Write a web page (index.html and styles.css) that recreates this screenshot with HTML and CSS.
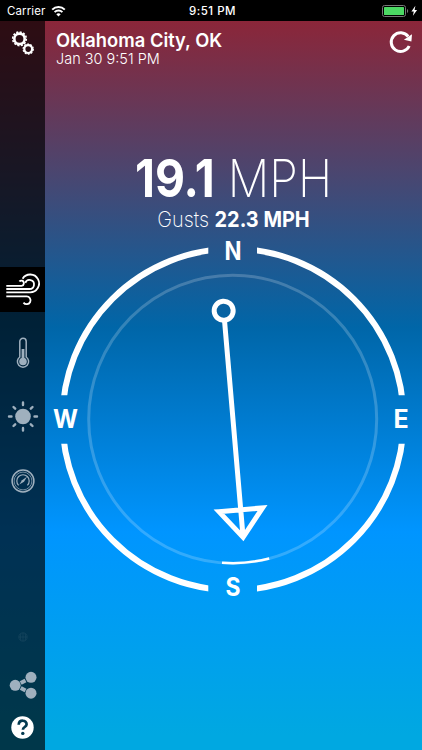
FILE: index.html
```html
<!DOCTYPE html>
<html lang="en">
  <head>
    <meta charset="utf-8">
    <meta name="viewport" content="width=device-width, initial-scale=1">
    <title>Wind</title>
    <link rel="stylesheet" href="styles.css">
  </head>

  <body>
    <header class="status">
      <div class="carrier">
        <span>Carrier</span>
        <svg width="15" height="12" viewBox="0 0 15 12" fill="none" stroke="#fff" stroke-width="2">
          <path d="M1.2 4.6a9 9 0 0 1 12.6 0M3.6 7.1a5.6 5.6 0 0 1 7.8 0"/>
          <path d="M7.5 11.5L5.3 9.3a3.2 3.2 0 0 1 4.4 0z" fill="#fff" stroke="none"/>
        </svg>
      </div>
      <div class="clock">9:51 PM</div>
      <div class="power">
        <svg width="36" height="12" viewBox="0 0 36 12">
          <rect x=".5" y=".5" width="23" height="11" rx="2" fill="none" stroke="#777"/>
          <rect x="2" y="2" width="20" height="8" rx=".6" fill="#4cd964"/>
          <path d="M25 4v4c1.6-.6 1.6-3.4 0-4z" fill="#777"/>
          <path d="M33.4.8l-4 5.8h2.4l-.9 4.2 4.2-5.8h-2.5z" fill="#fff"/>
        </svg>
      </div>
    </header>

    <div class="app">
      <nav class="sidebar">
        <a class="item settings">
          <svg width="24" height="26" viewBox="0 0 24 26" fill="none" stroke="#fff">
            <circle cx="8.5" cy="8.8" r="5.2" stroke-width="2.6"/>
            <circle cx="8.5" cy="8.8" r="6.8" stroke-width="1.6" stroke-dasharray="2.1 1.46"/>
            <circle cx="17.2" cy="19.1" r="3.9" stroke-width="2.2"/>
            <circle cx="17.2" cy="19.1" r="5.1" stroke-width="1.2" stroke-dasharray="1.8 1.4"/>
          </svg>
        </a>

        <div class="views">
          <a class="item active">
            <svg width="45" height="45" viewBox="0 0 45 45" fill="none" stroke="#fff" stroke-width="1.8">
              <path d="M6.300 18.900h15.200a2.700 2.700 0 0 0 .6-5.200c-1.100-.3-2.100 0-2.700.8"/>
              <path d="M6.300 22h23.200a4.500 4.500 0 1 0-4.200-6.100"/>
              <path d="M6.300 25.300H30a8.900 8.900 0 1 0-7.400-13.600"/>
              <path d="M6.300 29.400h20.200a3.900 3.900 0 1 1-3 6.200"/>
            </svg>
          </a>
          <a class="item">
            <svg width="14" height="32" viewBox="0 0 14 32" fill="none" stroke="#9fb0be" stroke-width="1.5">
              <path d="M3.800 20V4.500a3.200 3.200 0 0 1 6.400 0V20a5.600 5.600 0 1 1-6.400 0z"/>
              <circle cx="7" cy="24.500" r="3.800" fill="#9fb0be" stroke="none"/>
              <path d="M7 12v12" stroke-width="2.800"/>
            </svg>
          </a>
          <a class="item">
            <svg width="32" height="32" viewBox="0 0 32 32" stroke="#9fb0be" stroke-width="2.400" stroke-linecap="round">
              <circle cx="16" cy="15.500" r="7.800" fill="#9fb0be" stroke="none"/>
              <path d="M16 1.500V4M16 27v2.500M2 15.500h2.500M27.500 15.500H30M6.500 6l1.700 1.700M23.800 23.300l1.700 1.700M6.500 25l1.700-1.700M23.800 7.700L25.500 6"/>
            </svg>
          </a>
          <a class="item">
            <svg width="24" height="24" viewBox="0 0 24 24" fill="none" stroke="#9fb0be">
              <circle cx="12" cy="12" r="10.900" stroke-width="1.500"/>
              <circle cx="12" cy="12" r="8.900" stroke-width=".7"/>
              <path d="M7.600 16.300a6.200 6.200 0 1 1 8.800 0" stroke-width="1.200"/>
              <path d="M8.300 15.500l2.700-4.300 5-3.500-3 5z" fill="#9fb0be" stroke="none"/>
            </svg>
          </a>
        </div>

        <div class="tools">
          <svg class="globe" width="10" height="10" viewBox="0 0 10 10" fill="none" stroke="#fff" stroke-width=".8">
            <circle cx="5" cy="5" r="4.200"/>
            <path d="M1 5h8M5 1v8M3 1.500q-1.500 3.500 0 7M7 1.500q1.500 3.500 0 7"/>
          </svg>
          <svg class="share" width="28" height="28" viewBox="0 0 28 28">
            <path d="M11.700 11.900l4.800-2.500M11.700 16.900l4.800 2.500" fill="none" stroke="#9fb0be" stroke-width="4"/>
            <g fill="#9fb0be">
              <circle cx="6.200" cy="14.300" r="5.500"/>
              <circle cx="22" cy="6.300" r="5.500"/>
              <circle cx="22" cy="22.200" r="5.500"/>
            </g>
          </svg>
          <svg class="help" width="23" height="23" viewBox="0 0 23 23">
            <circle cx="11.500" cy="11.500" r="11.200" fill="#fff"/>
            <path d="M7.700 8.700c.3-5.500 8.200-5 7.900-.3-.2 2.700-3.700 2.600-3.700 5.300" fill="none" stroke="#023950" stroke-width="2.700"/>
            <circle cx="11.800" cy="17.400" r="1.700" fill="#023950"/>
          </svg>
        </div>
      </nav>

      <main class="main">
        <div class="top">
          <div class="place">
            <h1>Oklahoma City, OK</h1>
            <div class="date">Jan 30 9:51 PM</div>
          </div>
          <svg width="26" height="24" viewBox="0 0 26 24">
            <path d="M22.200 16a9.400 9.400 0 1 1-1-9.500" fill="none" stroke="#fff" stroke-width="3"/>
            <path d="M25 4.200l-.6 7.200-7.500-1.600z" fill="#fff"/>
          </svg>
        </div>

        <div class="speed"><b>19.1</b> <span>MPH</span></div>
        <div class="gusts"><span>Gusts</span> <b>22.3 MPH</b></div>

        <svg class="compass" width="377" height="370" viewBox="45 235 377 370">
          <clipPath id="quarters">
            <path d="M45 235h163.300v160.300H45zM257 235h165v160.300H257zM45 443.800h163.300V605H45zM257 443.800h165V605H257z"/>
          </clipPath>
          <circle class="outer" cx="233" cy="419.500" r="170.600" clip-path="url(#quarters)"/>
          <circle class="inner" cx="232.700" cy="419.200" r="144"/>
          <path class="range" d="M222 562.700A144 144 0 0 0 269.200 558.500"/>

          <g class="needle" transform="rotate(-4.900 233 419.500)">
            <circle cx="233" cy="310.300" r="9.500"/>
            <path d="M233 320v216M211.100 510.100h43.800L233 537.700z"/>
          </g>

          <g class="points">
            <text x="233" y="259.500" textLength="17" lengthAdjust="spacingAndGlyphs">N</text>
            <text x="401" y="427.500">E</text>
            <text x="233" y="595.500" textLength="15" lengthAdjust="spacingAndGlyphs">S</text>
            <text x="65.500" y="427.500" textLength="25" lengthAdjust="spacingAndGlyphs">W</text>
          </g>
        </svg>
      </main>
    </div>
  </body>
</html>
```

FILE: styles.css
```css
* {
  box-sizing: border-box;
}

body {
  margin: 0;
  height: 750px;
  overflow: hidden;
  font-family: Inter, "Liberation Sans", sans-serif;
  color: #fff;
}

svg {
  display: block;
  flex: none;
}

/* status bar */
.status {
  display: grid;
  grid-template-columns: 1fr auto 1fr;
  align-items: center;
  height: 21px;
  padding: 0 4px 0 7px;
  background: #000;
  font-size: 11.5px;
}

.carrier {
  display: flex;
  align-items: center;
  gap: 6px;
  letter-spacing: 0.1px;
}

.clock {
  font-weight: 500;
  letter-spacing: 0.5px;
}

.power {
  display: flex;
  justify-content: flex-end;
}

.app {
  display: flex;
  height: 729px;
  background: linear-gradient(#8b2639 0%, #4a4670 21%, #0066a8 42%, #0095ff 70%, #00a8e1 98%);
}

/* sidebar */
.sidebar {
  display: flex;
  flex-direction: column;
  width: 45px;
  background: rgba(0, 0, 0, 0.67);
}

.item {
  display: flex;
  align-items: center;
  justify-content: center;
  height: 45px;
}

.settings {
  height: 44px;
}

.views {
  display: flex;
  flex-direction: column;
  gap: 18.7px;
  margin-top: 202px;
}

.active {
  background: #000;
}

.tools {
  display: flex;
  flex-direction: column;
  align-items: center;
  margin-top: auto;
  padding-bottom: 11px;
}

.globe {
  opacity: 0.08;
}

.share {
  margin: 29px 0 17px;
}

/* main view */
.main {
  flex: 1;
}

.top {
  display: flex;
  justify-content: space-between;
  height: 115px;
  padding: 9px 9px 0 10.5px;
}

.place {
  transform: scaleX(0.965);
  transform-origin: left;
}

h1 {
  margin: 0;
  font-size: 19px;
  font-weight: 600;
  line-height: 21px;
}

.date {
  font-size: 15px;
  font-weight: 300;
  line-height: 15px;
}

.speed {
  height: 68px;
  padding-top: 11px;
  font-size: 52px;
  line-height: 64px;
  text-align: center;
  white-space: nowrap;
  transform: scaleX(0.89);
}

.speed span {
  font-weight: 200;
}

.gusts {
  height: 31px;
  font-size: 22px;
  line-height: 30px;
  text-align: center;
  transform: scaleX(0.905);
}

.gusts span {
  font-weight: 200;
}

/* compass */
.outer {
  fill: none;
  stroke: #fff;
  stroke-width: 6;
}

.inner {
  fill: none;
  stroke: rgba(255, 255, 255, 0.2);
  stroke-width: 3;
}

.range {
  fill: none;
  stroke: #fff;
  stroke-width: 2.5;
}

.needle {
  fill: none;
  stroke: #fff;
  stroke-width: 5;
}

.points {
  fill: #fff;
  font-size: 25px;
  font-weight: 700;
  text-anchor: middle;
}
```
